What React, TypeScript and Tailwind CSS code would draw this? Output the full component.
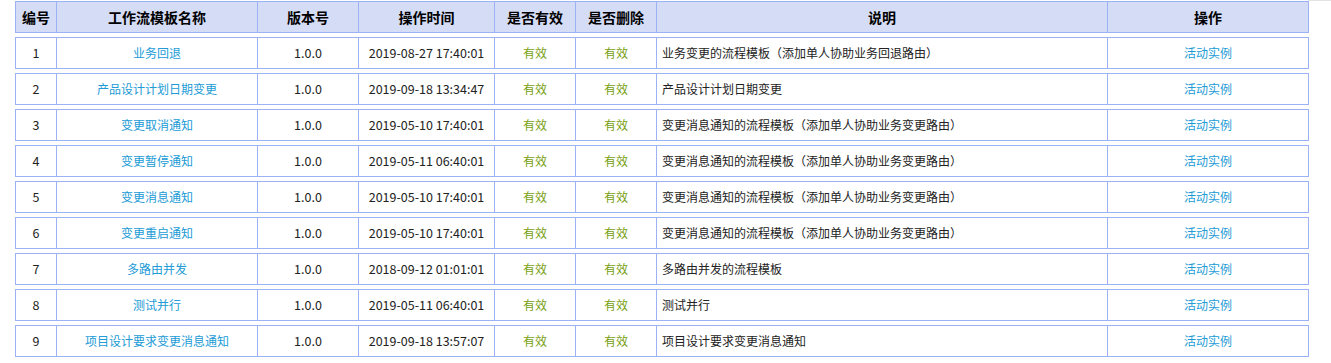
const rows = [
  { id: 1, name: '业务回退', version: '1.0.0', time: '2019-08-27 17:40:01', desc: '业务变更的流程模板（添加单人协助业务回退路由）' },
  { id: 2, name: '产品设计计划日期变更', version: '1.0.0', time: '2019-09-18 13:34:47', desc: '产品设计计划日期变更' },
  { id: 3, name: '变更取消通知', version: '1.0.0', time: '2019-05-10 17:40:01', desc: '变更消息通知的流程模板（添加单人协助业务变更路由）' },
  { id: 4, name: '变更暂停通知', version: '1.0.0', time: '2019-05-11 06:40:01', desc: '变更消息通知的流程模板（添加单人协助业务变更路由）' },
  { id: 5, name: '变更消息通知', version: '1.0.0', time: '2019-05-10 17:40:01', desc: '变更消息通知的流程模板（添加单人协助业务变更路由）' },
  { id: 6, name: '变更重启通知', version: '1.0.0', time: '2019-05-10 17:40:01', desc: '变更消息通知的流程模板（添加单人协助业务变更路由）' },
  { id: 7, name: '多路由并发', version: '1.0.0', time: '2018-09-12 01:01:01', desc: '多路由并发的流程模板' },
  { id: 8, name: '测试并行', version: '1.0.0', time: '2019-05-11 06:40:01', desc: '测试并行' },
  { id: 9, name: '项目设计要求变更消息通知', version: '1.0.0', time: '2019-09-18 13:57:07', desc: '项目设计要求变更消息通知' },
]

// border-left positions: 15 56 257 358 494 575 656 1107, right edge 1307
const cols = ['w-[41px]', 'w-[201px]', 'w-[101px]', 'w-[136px]', 'w-[81px]', 'w-[81px]', 'w-[451px]', 'w-[201px]']

const cell = 'h-full flex items-center justify-center border-l border-[#9db2f5] shrink-0'

export default function App() {
  return (
    <div className="min-h-screen bg-white text-[12px] text-[#222] font-['Noto_Sans_CJK_SC','Noto_Sans',sans-serif]">
      <div className="flex h-px">
        <div className="ml-auto w-[23px] bg-[#e3e3e3]" />
      </div>

      <div className="pl-[15px] flex flex-col gap-1">
        {/* Header */}
        <div className="flex h-8 w-fit border-y border-r border-[#9db2f5] bg-[#d5ddf6] text-[14px] font-bold text-black">
          <div className={`${cell} ${cols[0]}`}>编号</div>
          <div className={`${cell} ${cols[1]}`}>工作流模板名称</div>
          <div className={`${cell} ${cols[2]}`}>版本号</div>
          <div className={`${cell} ${cols[3]}`}>操作时间</div>
          <div className={`${cell} ${cols[4]}`}>是否有效</div>
          <div className={`${cell} ${cols[5]}`}>是否删除</div>
          <div className={`${cell} ${cols[6]}`}>说明</div>
          <div className={`${cell} ${cols[7]}`}>操作</div>
        </div>

        {rows.map((r) => (
          <div key={r.id} className="flex h-8 w-fit border-y border-r border-[#9db2f5] bg-white">
            <div className={`${cell} ${cols[0]} text-[12.5px]`}>{r.id}</div>
            <div className={`${cell} ${cols[1]} text-[#229bd6]`}>{r.name}</div>
            <div className={`${cell} ${cols[2]} text-[12.5px]`}>{r.version}</div>
            <div className={`${cell} ${cols[3]} text-[12.5px]`}>{r.time}</div>
            <div className={`${cell} ${cols[4]} text-[#77a010]`}>有效</div>
            <div className={`${cell} ${cols[5]} text-[#77a010]`}>有效</div>
            <div className={`${cell} ${cols[6]} !justify-start pl-[5px]`}>{r.desc}</div>
            <div className={`${cell} ${cols[7]} text-[#229bd6]`}>活动实例</div>
          </div>
        ))}
      </div>
    </div>
  )
}
